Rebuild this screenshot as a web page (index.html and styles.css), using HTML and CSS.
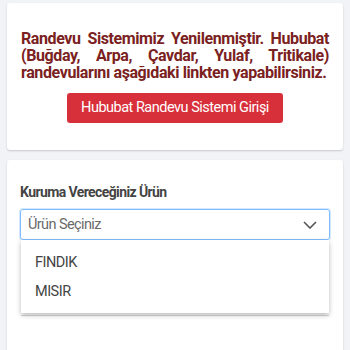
FILE: index.html
```html
<!DOCTYPE html>
<html lang="tr">
<head>
    <meta charset="UTF-8">
    <meta name="viewport" content="width=device-width, initial-scale=1.0">
    <title>Randevu</title>
    <link rel="stylesheet" href="styles.css">
</head>
<body>
    <div class="card notice">
        <p class="notice-text">Randevu Sistemimiz Yenilenmiştir. Hububat (Buğday, Arpa, Çavdar, Yulaf, Tritikale) randevularını aşağıdaki linkten yapabilirsiniz.</p>
        <a class="btn-red" href="#">Hububat Randevu Sistemi Girişi</a>
    </div>
    <div class="card form-card">
        <label class="field-label">Kuruma Vereceğiniz Ürün</label>
        <div class="select-wrap">
            <div class="select">
                <span>Ürün Seçiniz</span>
                <svg width="14" height="8" viewBox="0 0 14 8"><path d="M1 1l6 6 6-6" fill="none" stroke="#555" stroke-width="1.6"/></svg>
            </div>
            <ul class="options">
                <li>FINDIK</li>
                <li>MISIR</li>
            </ul>
        </div>
        <div class="field-under"></div>
    </div>
</body>
</html>
```

FILE: styles.css
```css
body {
    margin: 0;
    padding: 3px 7px 0;
    background: #f1f3f6;
    font-family: Roboto, "Liberation Sans", sans-serif;
    overflow: hidden;
}
.card {
    background: #fff;
    border-radius: 3px;
    box-shadow: 0 1px 2px rgba(0,0,0,0.18);
}
.notice {
    padding: 27px 14px 27px;
    text-align: center;
}
.notice-text {
    margin: 0 0 12px;
    color: #7a2121;
    font-weight: bold;
    font-size: 16px;
    line-height: 17px;
    letter-spacing: -0.4px;
    text-align: justify;
}
.btn-red {
    display: inline-block;
    background: #d8303a;
    color: #fff;
    text-decoration: none;
    font-size: 14.5px;
    letter-spacing: -0.5px;
    line-height: 30px;
    padding: 0 14px;
    border-radius: 3px;
    vertical-align: top;
}
.form-card {
    margin-top: 10px;
    padding: 24px 13px 40px;
}
.field-label {
    display: block;
    color: #444;
    font-weight: bold;
    font-size: 14px;
    letter-spacing: -0.6px;
    line-height: 17px;
    margin-bottom: 8px;
}
.select-wrap {
    position: relative;
}
.select {
    display: flex;
    justify-content: space-between;
    align-items: center;
    height: 29px;
    padding: 0 12px 0 7px;
    border: 1px solid #80bdff;
    border-radius: 3px;
    box-shadow: 0 0 0 1px rgba(128,189,255,0.35);
    color: #6a6a6a;
    font-size: 14.5px;
    letter-spacing: -0.6px;
}
.options {
    position: absolute;
    top: 31px;
    left: 1px;
    right: 1px;
    margin: 0;
    padding: 8px 0 7px;
    list-style: none;
    background: #fff;
    box-shadow: 0 2px 5px rgba(0,0,0,0.28);
    z-index: 2;
}
.options li {
    padding: 0 14px;
    line-height: 29px;
    font-size: 14.5px;
    letter-spacing: -0.5px;
    color: #444;
}
.field-under {
    margin: 18px 1px 0;
    height: 57px;
    border-bottom: 1px solid #d8d8d8;
}
```
